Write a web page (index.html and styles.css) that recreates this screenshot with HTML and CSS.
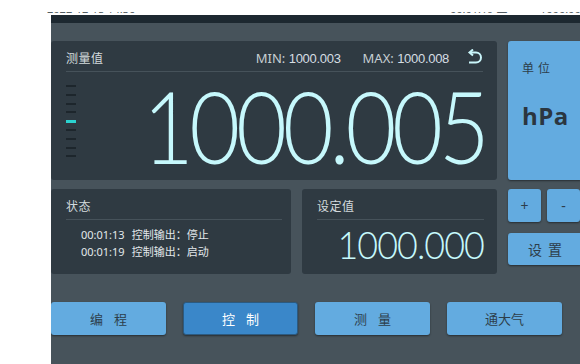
FILE: index.html
```html
<!DOCTYPE html>
<html lang="zh">
<head>
<meta charset="utf-8">
<link rel="stylesheet" href="styles.css">
</head>
<body>
<div class="topline">
  <div class="topclip">
    <span class="toptext left">2022-12-15 14:36</span>
    <span class="toptext mid">00:01:19 ▲</span>
    <span class="toptext right">1000.000</span>
  </div>
</div>
<div class="app">
  <div class="header"></div>
  <div class="main">
    <div class="leftcol">
      <section class="panel measure">
        <div class="phead">
          <span class="label">测量值</span>
          <span class="minmax"><span class="mmk">MIN:</span> <span class="mmv">1000.003</span></span>
          <span class="minmax"><span class="mmk">MAX:</span> <span class="mmv">1000.008</span></span>
          <svg class="undo" width="18" height="16" viewBox="0 0 18 16">
            <path d="M5 3.5 H11 A5 5 0 0 1 11 13.5 H4" fill="none" stroke="#c9f5fa" stroke-width="2"/>
            <path d="M8 0.5 L4.5 3.5 L8 6.5" fill="none" stroke="#c9f5fa" stroke-width="2"/>
          </svg>
        </div>
        <div class="mbody">
          <div class="scale">
            <i></i><i></i><i></i><i></i><i class="on"></i><i></i><i></i><i></i><i></i>
          </div>
          <div class="bigwrap"><span class="big">1000.005</span></div>
        </div>
      </section>
      <div class="row2">
        <section class="panel status">
          <div class="phead"><span class="label">状态</span></div>
          <div class="log">
            <div class="logrow"><span class="t">00:01:13</span><span>控制输出：停止</span></div>
            <div class="logrow"><span class="t">00:01:19</span><span>控制输出：启动</span></div>
          </div>
        </section>
        <section class="panel setp">
          <div class="phead"><span class="label">设定值</span></div>
          <div class="setwrap"><span class="setval">1000.000</span></div>
        </section>
      </div>
    </div>
    <div class="rightcol">
      <div class="btn unit">
        <span class="ulabel">单位</span>
        <span class="uval">hPa</span>
      </div>
      <div class="pm">
        <div class="btn small">+</div>
        <div class="btn small">-</div>
      </div>
      <div class="btn setbtn">设置</div>
    </div>
  </div>
  <nav class="tabs">
    <div class="btn tab spaced">编程</div>
    <div class="btn tab active spaced">控制</div>
    <div class="btn tab spaced">测量</div>
    <div class="btn tab">通大气</div>
  </nav>
</div>
</body>
</html>
```

FILE: styles.css
```css
* { box-sizing: border-box; }
html, body { margin: 0; padding: 0; }
body {
  background: #ffffff;
  width: 580px;
  height: 364px;
  overflow: hidden;
  font-family: "Noto Sans", "Noto Sans CJK SC", sans-serif;
}
.topline {
  height: 15px;
  padding: 12px 0 0 47px;
}
.topclip {
  position: relative;
  height: 3px;
  overflow: hidden;
}
.toptext {
  position: absolute;
  top: -9px;
  font-size: 11px;
  line-height: 12px;
  color: #555e63;
  white-space: nowrap;
}
.toptext.left { left: 0; }
.toptext.mid { left: 403px; }
.toptext.right { left: 493px; }

.app {
  margin-left: 51px;
  width: 531px;
  height: 349px;
  background: #47535b;
  overflow: hidden;
}
.header {
  height: 8px;
  background: #1d2830;
}
.main {
  display: flex;
  gap: 11px;
  padding-top: 18px;
}
.leftcol {
  width: 446px;
  display: flex;
  flex-direction: column;
  gap: 9px;
}
.panel {
  background: #2f3a42;
  border-radius: 3px;
}
.phead {
  display: flex;
  align-items: center;
  height: 31px;
  padding-top: 4px;
  margin: 0 14px 0 15px;
  border-bottom: 1px solid #46525a;
  color: #d3dadd;
}
.label {
  font-size: 12px;
  letter-spacing: 0.5px;
}
.measure { height: 139px; }
.measure .phead { padding-top: 3px; }
.measure .label { margin-right: auto; }
.minmax {
  font-size: 13px;
  color: #c7cfd3;
  margin-right: 22px;
  white-space: nowrap;
}
.minmax:last-of-type { margin-right: 16px; }
.mmv {
  font-family: "Liberation Sans", sans-serif;
  font-size: 13px;
  letter-spacing: -0.3px;
  color: #d6dee2;
}
.undo { margin-top: -2px; }
.mbody {
  display: flex;
  padding: 0 12px 0 15px;
  height: 107px;
}
.scale {
  width: 10px;
  display: flex;
  flex-direction: column;
  gap: 6.8px;
  padding-top: 13px;
}
.scale i {
  display: block;
  width: 10px;
  height: 2px;
  background: #1d262c;
}
.scale i.on {
  height: 3px;
  background: #2bd3d0;
  margin: -0.5px 0;
}
.bigwrap {
  flex: 1;
  min-width: 0;
  text-align: right;
}
.big {
  display: inline-block;
  font-family: Lato, "Liberation Sans", sans-serif;
  font-weight: 300;
  font-size: 100px;
  line-height: 100px;
  margin-top: 3px;
  color: #c6f8fc;
  letter-spacing: -5px;
  transform: scaleX(0.88);
  transform-origin: right center;
  white-space: nowrap;
}
.row2 {
  display: flex;
  gap: 11px;
  height: 85px;
}
.status { width: 240px; }
.status .phead { margin-right: 9px; }
.log {
  padding: 7px 0 0 30px;
  color: #e2e8eb;
  font-size: 11px;
  line-height: 16.5px;
}
.logrow .t { margin-right: 7px; }
.setp { flex: 1; }
.setp .phead { margin-right: 13px; }
.setwrap {
  text-align: right;
  padding-right: 13px;
}
.setval {
  display: inline-block;
  font-family: Lato, "Liberation Sans", sans-serif;
  font-weight: 300;
  font-size: 37px;
  line-height: 37px;
  margin-top: 6px;
  letter-spacing: -1px;
  color: #c6f8fc;
  transform: scaleX(0.97);
  transform-origin: right center;
  white-space: nowrap;
}

.rightcol {
  width: 74px;
  display: flex;
  flex-direction: column;
}
.btn {
  background: #63abe0;
  color: #2d3e4b;
  border-radius: 3px;
  box-shadow: 0 1px 2px rgba(0,0,0,0.45);
  display: flex;
  align-items: center;
  justify-content: center;
  font-size: 13px;
}
.unit {
  height: 139px;
  flex-direction: column;
  align-items: flex-start;
  justify-content: flex-start;
  padding: 18px 0 0 14px;
}
.ulabel {
  font-size: 12px;
  letter-spacing: 4px;
  color: #2d3e4b;
}
.uval {
  margin-top: 22px;
  font-family: "Open Sans", "Noto Sans", sans-serif;
  font-weight: 700;
  font-size: 24px;
  letter-spacing: 0.5px;
  color: #2b3640;
}
.pm {
  display: flex;
  gap: 6px;
  margin-top: 9px;
}
.small {
  width: 33px;
  height: 33px;
  font-size: 14px;
}
.setbtn {
  margin-top: 11px;
  height: 32px;
  letter-spacing: 6px;
  padding-left: 6px;
  font-size: 14px;
}
.tabs {
  display: flex;
  gap: 17px;
  margin-top: 28px;
}
.tab {
  width: 115px;
  height: 33px;
  flex: none;
}
.tab.spaced {
  letter-spacing: 11px;
  padding-left: 11px;
}
.tab.active {
  background: #3a87c9;
  color: #ffffff;
  border: 1px solid #2c5a80;
}
```
